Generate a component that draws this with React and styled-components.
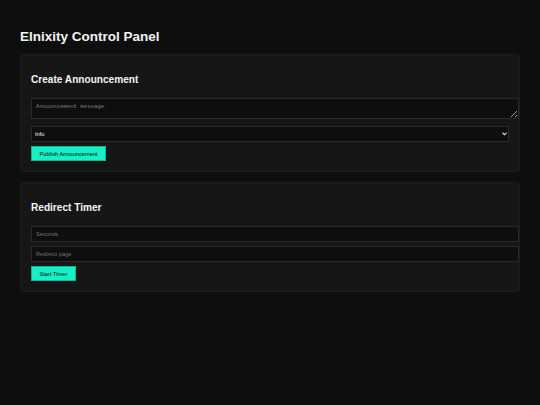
import React from "react";
import styled, { createGlobalStyle } from "styled-components";

const Global = createGlobalStyle`
  html, body { margin: 0; padding: 0; background: #0e0e0e; }
  body { font-family: "Liberation Sans", Arial, sans-serif; color: #f2f2f2; }
  * { box-sizing: content-box; }
`;

const Page = styled.div`
  padding: 29px 20px 20px;
  min-height: 356px;
  background: #0e0e0e;
`;

const Title = styled.h1`
  margin: 0 0 9px;
  font-size: 13.5px;
  font-weight: 700;
  line-height: 16px;
  color: #f4f4f4;
`;

const Card = styled.section`
  display: flex;
  flex-direction: column;
  align-items: flex-start;
  background: #161616;
  border: 1px solid #1c1c1c;
  border-radius: 4px;
  padding: 10px;
  margin-bottom: 10px;
`;

const CardTitle = styled.h2`
  margin: 8.5px 0 12.5px;
  font-size: 10.1px;
  line-height: 12px;
  font-weight: 700;
  color: #f4f4f4;
`;

const fieldBase = `
  display: block;
  background: #0e0e0e;
  border: 1px solid #2a2a2a;
  color: #eee;
  outline: none;
  margin: 0;
`;

const TextArea = styled.textarea`
  ${fieldBase}
  width: 100%;
  height: 11px;
  padding: 4px;
  font-family: "Liberation Mono", "DejaVu Sans Mono", monospace;
  font-size: 5.7px;
  line-height: 7px;
  margin-bottom: 7px;
  &::placeholder { color: #808080; }
`;

const SelectWrap = styled.div`
  position: relative;
  width: 100%;
  margin-bottom: 4px;
`;

const Select = styled.select`
  ${fieldBase}
  box-sizing: border-box;
  appearance: none;
  -webkit-appearance: none;
  width: 100%;
  height: 16px;
  padding: 0 3px;
  border-radius: 0;
  font-family: "Liberation Sans", Arial, sans-serif;
  font-size: 5.7px;
  color: #f0f0f0;
`;

const Chevron = styled.svg`
  position: absolute;
  right: 2px;
  top: 6px;
  width: 5px;
  height: 4px;
  pointer-events: none;
`;

const Input = styled.input`
  ${fieldBase}
  width: 100%;
  height: 6px;
  padding: 4px;
  font-family: "Liberation Sans", Arial, sans-serif;
  font-size: 5.7px;
  margin-bottom: 4px;
  &::placeholder { color: #747474; }
`;

const Button = styled.button`
  box-sizing: border-box;
  height: 15px;
  padding: 0 7.5px;
  background: #16f0c4;
  border: 1px solid #0fb894;
  color: #0a0a0a;
  font-family: "Liberation Sans", Arial, sans-serif;
  font-size: 5.7px;
  cursor: pointer;
  margin: 0;
`;

export default function App() {
  return (
    <>
      <Global />
      <Page>
        <Title>Elnixity Control Panel</Title>
        <Card>
          <CardTitle>Create Announcement</CardTitle>
          <TextArea placeholder="Announcement message" />
          <SelectWrap>
            <Select defaultValue="info">
              <option value="info">Info</option>
              <option value="warning">Warning</option>
            </Select>
            <Chevron viewBox="0 0 10 8">
              <path d="M1 1.5 L5 5.5 L9 1.5" fill="none" stroke="#d8d8d8" strokeWidth="2.2" />
            </Chevron>
          </SelectWrap>
          <Button>Publish Announcement</Button>
        </Card>
        <Card>
          <CardTitle>Redirect Timer</CardTitle>
          <Input placeholder="Seconds" />
          <Input placeholder="Redirect page" />
          <Button>Start Timer</Button>
        </Card>
      </Page>
    </>
  );
}
